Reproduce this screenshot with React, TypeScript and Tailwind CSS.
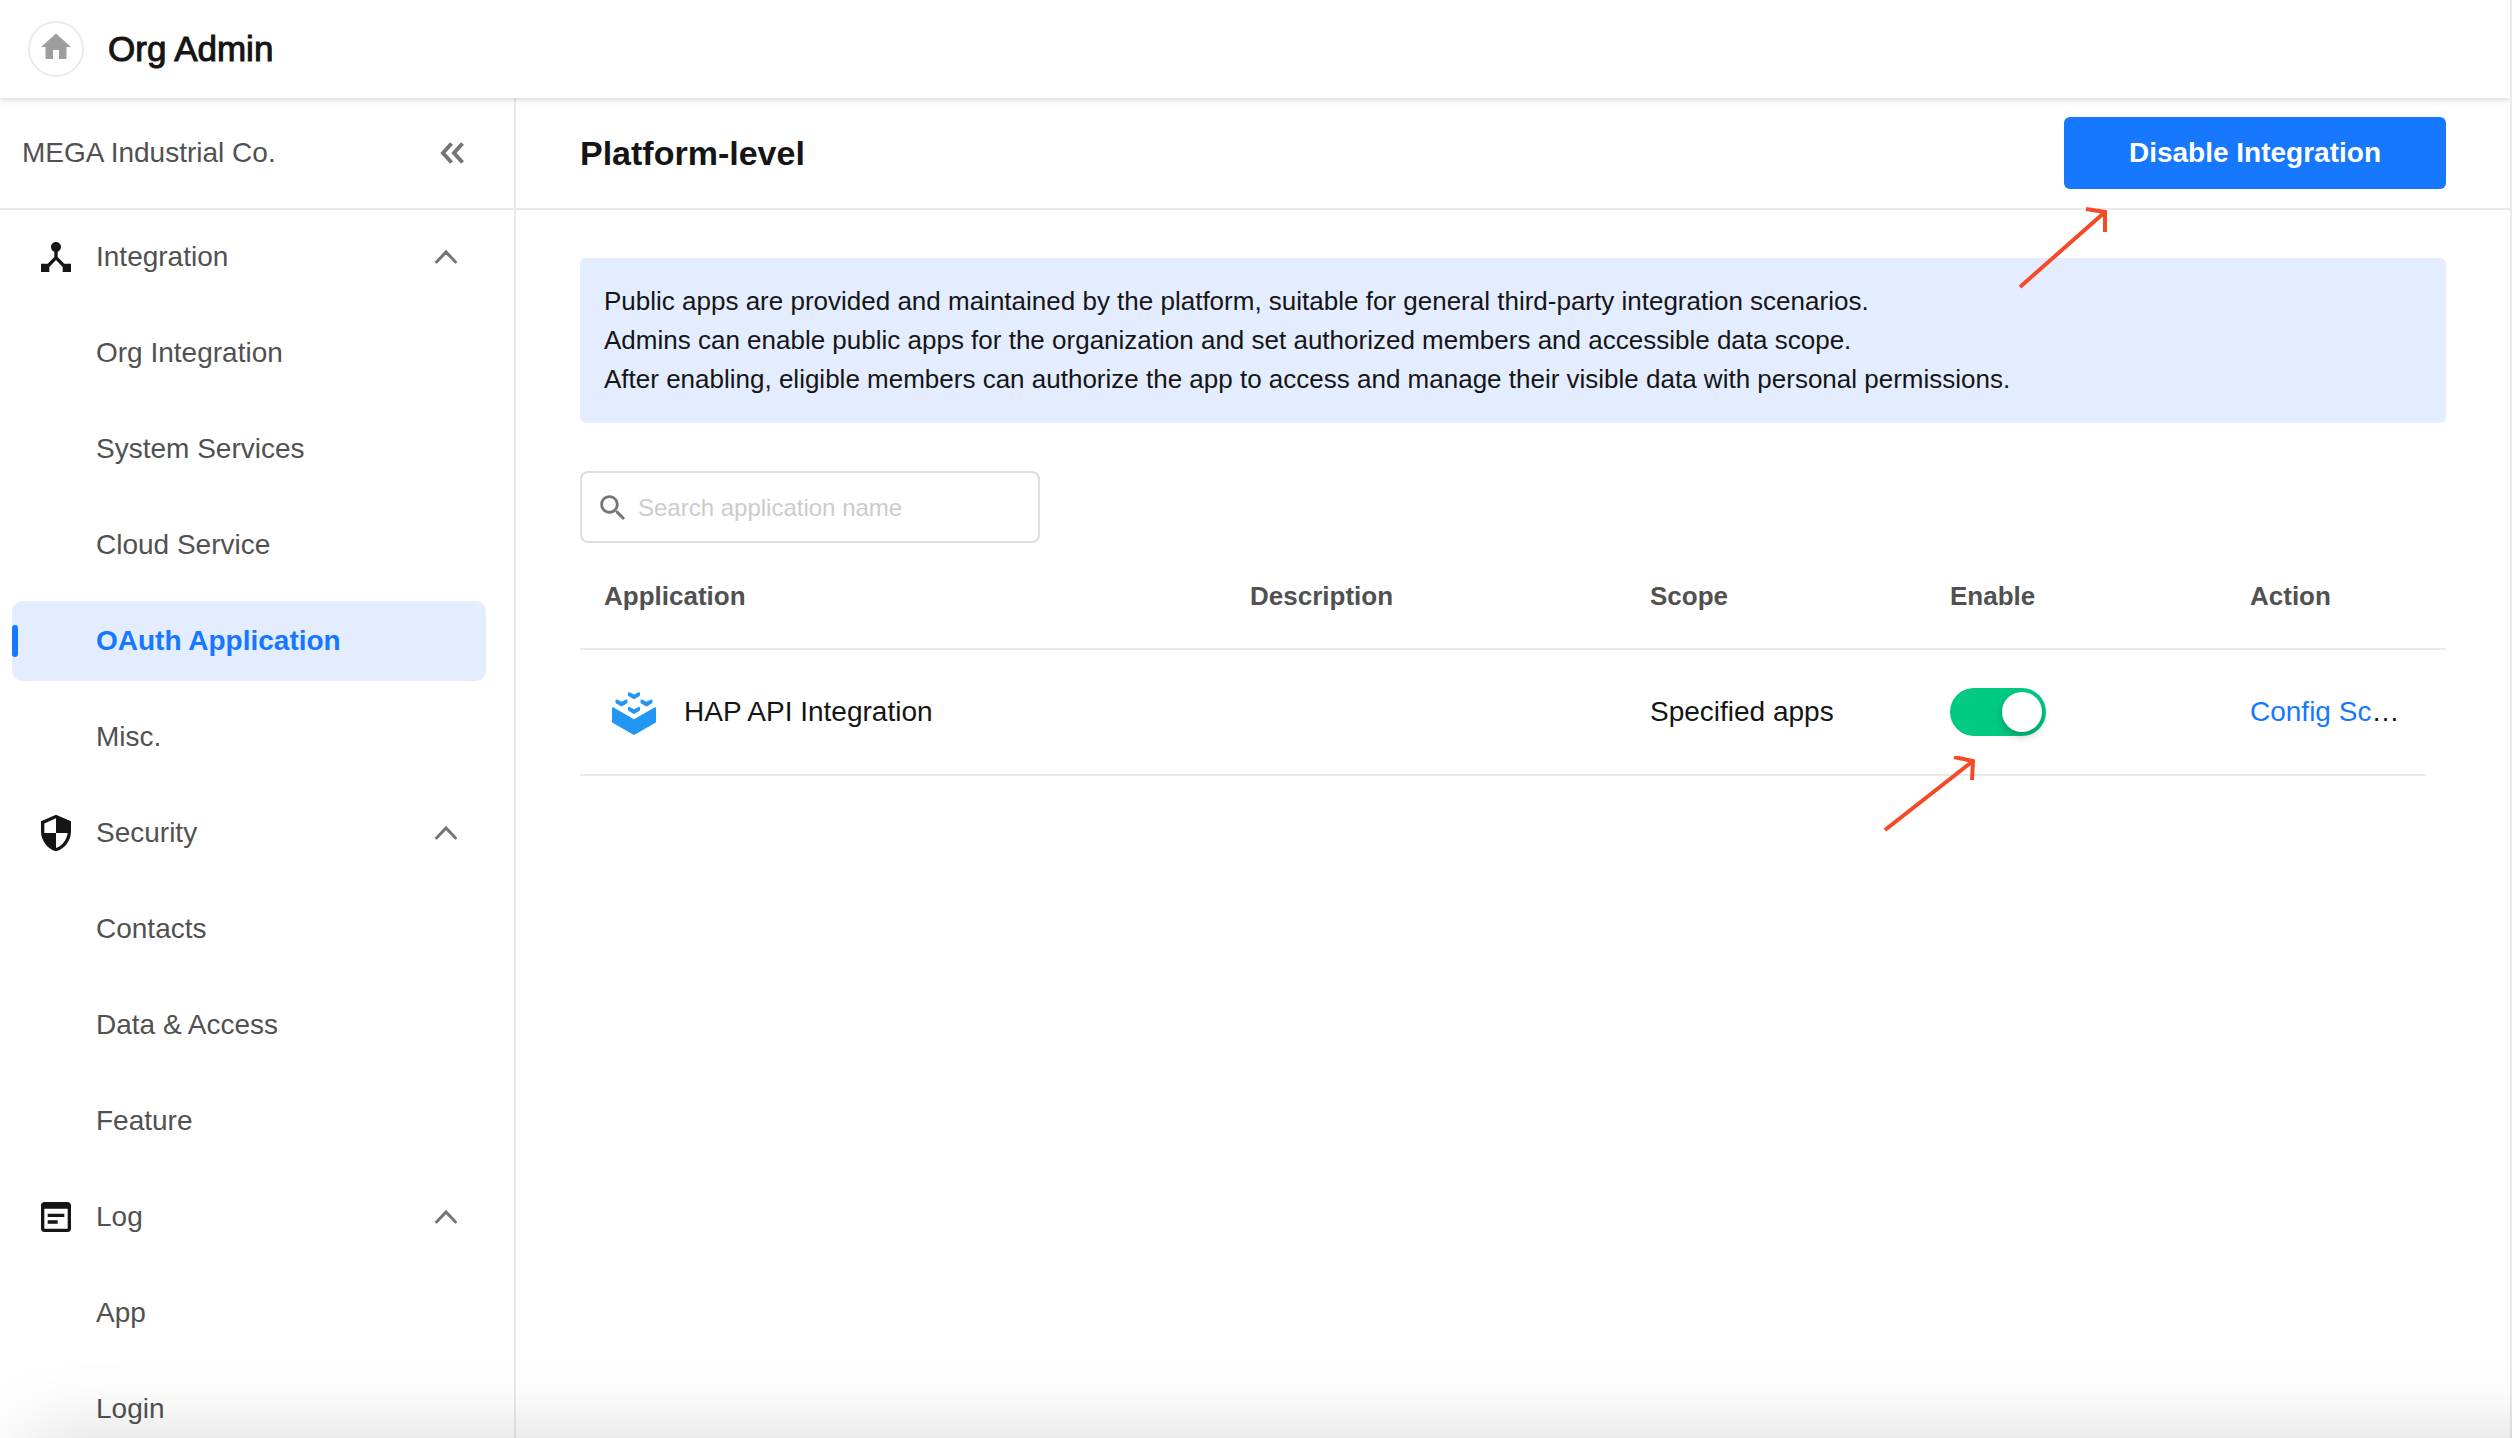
import { useState } from 'react';
import type { ReactNode } from 'react';

interface NavGroup {
  label: string;
  icon: ReactNode;
  items: string[];
}

const navGroups: NavGroup[] = [
  {
    label: 'Integration',
    icon: (
      <path d="M17 16l-4-4V8.82C14.16 8.4 15 7.3 15 6c0-1.66-1.34-3-3-3S9 4.34 9 6c0 1.3.84 2.4 2 2.82V12l-4 4H3v5h5v-3.05l4-4.2 4 4.2V21h5v-5h-4z" />
    ),
    items: ['Org Integration', 'System Services', 'Cloud Service', 'OAuth Application', 'Misc.'],
  },
  {
    label: 'Security',
    icon: (
      <path d="M12 1L3 5v6c0 5.55 3.84 10.74 9 12 5.16-1.26 9-6.45 9-12V5l-9-4zm0 10.99h7c-.53 4.12-3.28 7.79-7 8.94V12H5V6.3l7-3.11v8.8z" />
    ),
    items: ['Contacts', 'Data & Access', 'Feature'],
  },
  {
    label: 'Log',
    icon: (
      <path d="M19 3H5c-1.11 0-2 .9-2 2v14c0 1.1.89 2 2 2h14c1.1 0 2-.9 2-2V5c0-1.1-.9-2-2-2zm0 16H5V7h14v12zM7 10h10v2H7zM7 14h6v2H7z" />
    ),
    items: ['App', 'Login'],
  },
];

const notice = [
  'Public apps are provided and maintained by the platform, suitable for general third-party integration scenarios.',
  'Admins can enable public apps for the organization and set authorized members and accessible data scope.',
  'After enabling, eligible members can authorize the app to access and manage their visible data with personal permissions.',
];

function TopBar() {
  return (
    <header className="relative z-10 flex h-[98px] shrink-0 items-center gap-6 bg-white px-7 shadow-[0_2px_6px_rgba(0,0,0,0.16)]">
      <a
        href="#home"
        aria-label="Home"
        className="flex size-14 items-center justify-center rounded-full border-2 border-[#eaeaea] pb-1"
      >
        <svg viewBox="0 0 24 24" className="size-9 fill-[#9e9e9e]">
          <path d="M10 20v-6h4v6h5v-8h3L12 3 2 12h3v8z" />
        </svg>
      </a>
      <h1 className="text-[35px] leading-10 [-webkit-text-stroke:1px_#151515]">Org Admin</h1>
    </header>
  );
}

function Sidebar() {
  const [active, setActive] = useState('OAuth Application');

  return (
    <aside className="flex w-[516px] shrink-0 flex-col border-r-2 border-[#eaeaea] text-[28px] leading-8 text-[#515151]">
      <div className="flex h-28 shrink-0 items-center justify-between border-b-2 border-[#eaeaea] pl-[22px] pr-12">
        <span>MEGA Industrial Co.</span>
        <button type="button" aria-label="Collapse menu">
          <svg viewBox="0 0 32 32" className="size-8 fill-none stroke-[#757575] stroke-4">
            <path d="M17.500 6.500L9 16l8.500 9.500M28.500 6.500L20 16l8.500 9.500" />
          </svg>
        </button>
      </div>
      <nav className="flex flex-col gap-4 pl-3 pr-7 pt-[7px]">
        {navGroups.map((group) => (
          <div key={group.label} className="flex flex-col gap-4">
            <button type="button" className="flex h-20 items-center gap-5 px-6 text-left">
              <svg viewBox="0 0 24 24" className="size-10 fill-[#151515]">
                {group.icon}
              </svg>
              <span className="flex-1">{group.label}</span>
              <svg viewBox="0 0 32 32" className="size-8 fill-none stroke-[#757575] stroke-3">
                <path d="M6.500 21l9.500-10 9.500 10" strokeLinecap="round" />
              </svg>
            </button>
            {group.items.map((item) => (
              <a
                key={item}
                href="#nav"
                onClick={() => setActive(item)}
                className={
                  item === active
                    ? 'flex h-20 items-center gap-[78px] rounded-[10px] bg-[#e4edff] font-bold text-[#1677ff]'
                    : 'flex h-20 items-center pl-[84px]'
                }
              >
                {item === active && <span className="h-8 w-1.5 rounded-full bg-[#1677ff]" />}
                {item}
              </a>
            ))}
          </div>
        ))}
      </nav>
    </aside>
  );
}

function AppIcon() {
  return (
    <svg viewBox="0 0 60 60" className="size-[60px] shrink-0 fill-[#2196f3]">
      <path d="M8 26.500q0-1.800 1.600-1L30 37.300l20.400-11.800q1.600-.8 1.600 1V39.500q0 1-1 1.600L31 52.500q-1 .6-2 0L9 41.100Q8 40.500 8 39.500z" />
      <path d="M24 11.500q0-2 2-1l4 2 4-2q2-1 2 1v1.500q0 .8-.8 1.200L31 16.800q-1 .6-2 0l-4.200-2.600Q24 13.800 24 13z" />
      <path d="M11.500 18.800q0-2 2-1l4 2 4-2q2-1 2 1v1.500q0 .8-.8 1.200l-4.200 2.600q-1 .6-2 0l-4.200-2.600q-.8-.4-.8-1.200z" />
      <path d="M36.500 18.800q0-2 2-1l4 2 4-2q2-1 2 1v1.500q0 .8-.8 1.200l-4.200 2.600q-1 .6-2 0l-4.200-2.600q-.8-.4-.8-1.200z" />
      <path d="M24 26.200q0-2 2-1l4 2 4-2q2-1 2 1v1.500q0 .8-.8 1.200L31 31.500q-1 .6-2 0l-4.200-2.600q-.8-.4-.8-1.200z" />
    </svg>
  );
}

function AppTable() {
  const [enabled, setEnabled] = useState(true);

  return (
    <table className="w-full table-fixed text-left">
      <thead className="text-[26px] leading-8 text-[#515151]">
        <tr className="h-[106px] border-b-2 border-[#eaeaea]">
          <th className="px-6">Application</th>
          <th className="w-[400px] px-6">Description</th>
          <th className="w-[300px] px-6">Scope</th>
          <th className="w-[300px] px-6">Enable</th>
          <th className="w-[200px] px-6">Action</th>
          {/* scrollbar gutter */}
          <th className="w-5" />
        </tr>
      </thead>
      <tbody className="text-[28px] leading-8 [&_td]:h-[126px] [&_td]:px-6">
        <tr className="[&_td:not(:last-child)]:border-b-2 [&_td]:border-[#eaeaea]">
          <td>
            <div className="flex items-center gap-5">
              <AppIcon />
              HAP API Integration
            </div>
          </td>
          <td />
          <td>Specified apps</td>
          <td>
            <div className="relative flex">
              <input
                type="checkbox"
                role="switch"
                aria-label="Enable HAP API Integration"
                checked={enabled}
                onChange={(e) => setEnabled(e.target.checked)}
                className="flex h-12 w-24 appearance-none rounded-full bg-gray-300 p-1 before:size-10 before:rounded-full before:bg-white before:shadow-[0_4px_8px_rgba(0,0,0,0.25)] checked:justify-end checked:bg-[#01ca83]"
              />
              <svg
                viewBox="0 0 92 76"
                className="pointer-events-none absolute -left-[66px] top-[68px] h-[76px] w-[92px] fill-none stroke-[#f54a27] stroke-4"
              >
                <path d="M1 74L89 5M70 1l19 4-1 19" />
              </svg>
            </div>
          </td>
          <td className="whitespace-nowrap">
            <a href="#scope" title="Config Scope" className="text-[#1677ff]">
              Config Sc
            </a>
            …
          </td>
          <td />
        </tr>
      </tbody>
    </table>
  );
}

export default function App() {
  return (
    <div className="flex h-screen flex-col overflow-hidden border-r-2 border-[#eaeaea] bg-white font-['Liberation_Sans',Arial,sans-serif] text-[#151515]">
      <TopBar />
      <div className="flex min-h-0 flex-1">
        <Sidebar />
        <main className="min-w-0 flex-1">
          <div className="flex h-28 items-center justify-between border-b-2 border-[#eaeaea] px-16">
            <h2 className="text-[34px] font-bold leading-10">Platform-level</h2>
            <div className="relative">
              <button
                type="button"
                className="h-[72px] rounded-md bg-[#1677ff] px-[65px] text-[28px] font-bold leading-8 text-white"
              >
                Disable Integration
              </button>
              <svg
                viewBox="0 0 92 84"
                className="pointer-events-none absolute -left-[46px] top-[90px] h-[84px] w-[92px] fill-none stroke-[#f54a27] stroke-4"
              >
                <path d="M2 80L87 5M68 2l19 3 0 20" />
              </svg>
            </div>
          </div>

          <div className="px-16 pt-12">
            <div className="rounded-md bg-[#e4edff] p-6 text-[26px] leading-[39px]">
              {notice.map((line) => (
                <p key={line}>{line}</p>
              ))}
            </div>

            <label className="mt-12 flex h-[72px] w-[460px] items-center gap-2 rounded-lg border-2 border-[#ddd] px-3.5 pt-0.5">
              <svg viewBox="0 0 24 24" className="size-[34px] shrink-0 fill-[#757575]">
                <path d="M15.500 14h-.79l-.28-.27C15.410 12.590 16 11.110 16 9.500 16 5.910 13.090 3 9.500 3S3 5.910 3 9.500 5.910 16 9.500 16c1.610 0 3.090-.59 4.230-1.570l.27.28v.79l5 4.990L20.490 19l-4.990-5zm-6 0C7.010 14 5 11.990 5 9.500S7.010 5 9.500 5 14 7.010 14 9.500 11.990 14 9.500 14z" />
              </svg>
              <input
                type="text"
                aria-label="Search application name"
                placeholder="Search application name"
                className="min-w-0 flex-1 text-[24px] leading-8 outline-none placeholder:text-[#ccc]"
              />
            </label>

            <AppTable />
          </div>
        </main>
      </div>

      {/* soft shadow along the bottom edge of the window */}
      <div className="pointer-events-none fixed inset-x-0 bottom-0 h-24 overflow-hidden">
        <div className="absolute -right-24 left-7 top-full h-24 shadow-[0_0_80px_rgba(0,0,0,0.16)]" />
      </div>
    </div>
  );
}
